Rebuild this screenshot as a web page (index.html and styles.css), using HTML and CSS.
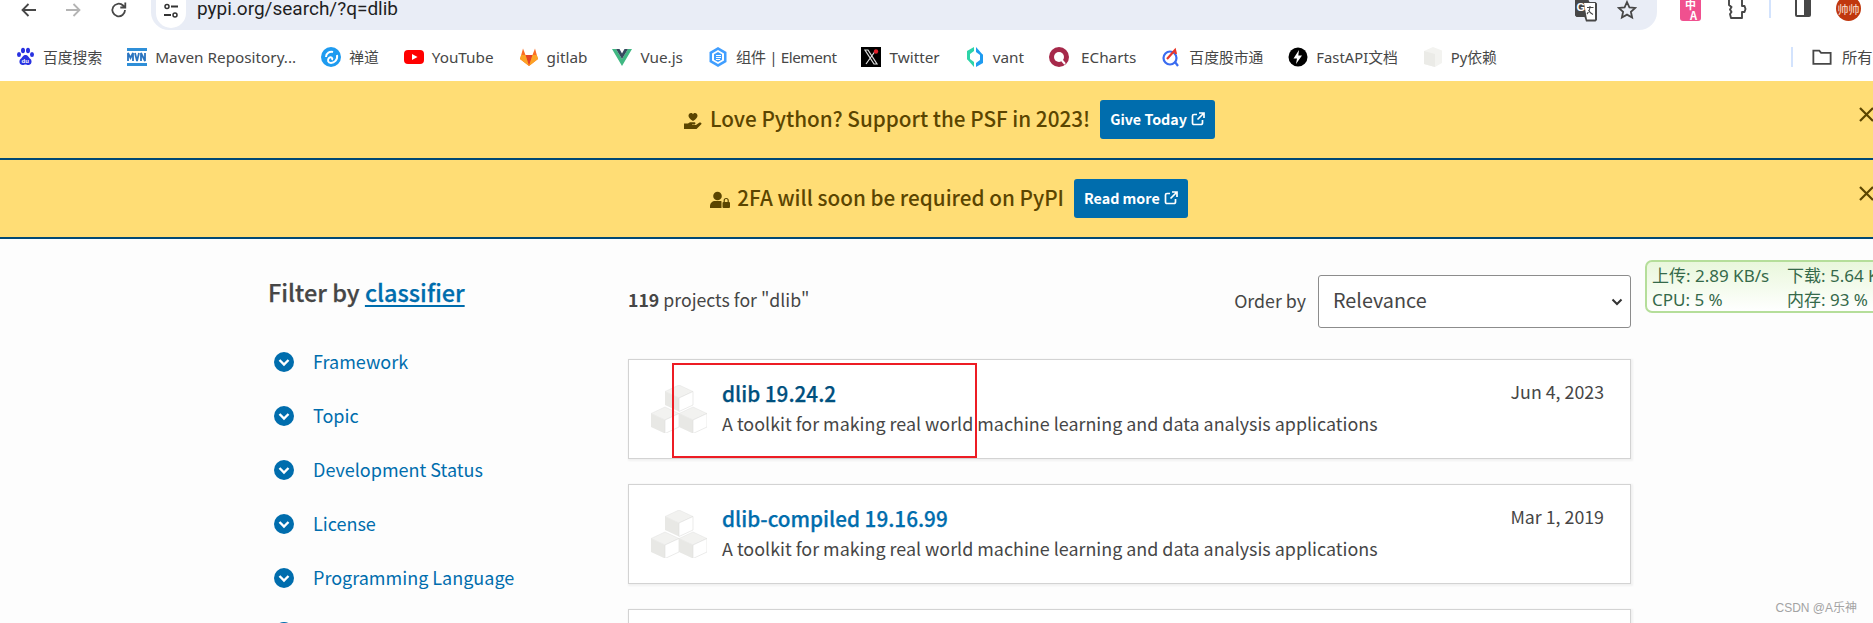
FILE: index.html
```html
<!DOCTYPE html>
<html lang="zh">
<head>
<meta charset="utf-8">
<title>dlib - Search results - PyPI</title>
<link rel="stylesheet" href="styles.css">
</head>
<body>
<div class="toolbar">
  <svg class="tool-icon" viewBox="0 0 20 20"><path d="M17 10H4M9.5 4 3.5 10l6 6" fill="none" stroke="#474747" stroke-width="1.8"/></svg>
  <svg class="tool-icon forward" viewBox="0 0 20 20"><path d="M3 10h13M10.500 4l6 6-6 6" fill="none" stroke="#b4b4b4" stroke-width="1.800"/></svg>
  <svg class="tool-icon reload" viewBox="0 0 20 20"><path d="M16 10a6.300 6.300 0 1 1-1.900-4.500L16 7.300M16.300 2.500v5h-5" fill="none" stroke="#474747" stroke-width="1.800"/></svg>
  <div class="omnibox">
    <span class="site-btn"><svg viewBox="0 0 20 20" width="20" height="20"><circle cx="6" cy="5.500" r="2" fill="none" stroke="#333" stroke-width="1.500"/><path d="M10 5.500h7M3 14h7" stroke="#333" stroke-width="1.800"/><circle cx="14" cy="14" r="2" fill="none" stroke="#333" stroke-width="1.500"/></svg></span>
    <span class="url">pypi.org/search/?q=dlib</span>
    <span class="omni-end">
      <svg class="translate" viewBox="0 0 22 24"><path d="M0 1.500 1.500 0h11l2 4h6L22 5.500V22l-1.500 1.500H11L9.500 19H1.500L0 17.500z" fill="#474747"/><path d="M9 5h11v16.500h-8z" fill="#fff"/><text x="1.500" y="13" class="g-letter">G</text><path d="M12 9.500h6.500M15 8v1.500c-.3 3-1.500 5-3 6.500M13.500 12c.8 2 2.500 3.500 4.500 4.500" fill="none" stroke="#474747" stroke-width="1.100"/></svg>
      <svg class="star" viewBox="0 0 20 20"><path d="m10 2 2.400 5.300 5.800.6-4.300 3.900 1.200 5.700L10 14.600l-5.100 2.900 1.200-5.700-4.300-3.900 5.800-.6z" fill="none" stroke="#474747" stroke-width="1.800"/></svg>
    </span>
  </div>
  <div class="ext-group">
    <span class="ext-pink"><span class="ext-zh">中</span><span class="ext-a">A</span></span>
    <svg class="puzzle" viewBox="0 0 20 20"><path d="M2 -2h13v8h2.500l1 3-1 3H15v6H4l-1-4 1.500-2L3 9.500 4.500 7 2 5z" fill="#fff" stroke="#474747" stroke-width="1.900" stroke-linejoin="round"/></svg>
    <span class="ext-sep"></span>
    <svg class="panel" viewBox="0 0 18 18"><rect x="1" y="-2" width="16" height="19" rx="2" fill="#474747"/><rect x="3" y="0" width="7" height="15" fill="#fff"/></svg>
    <span class="avatar">帅帅</span>
  </div>
</div>

<div class="bookmarks">
  <a class="bm bm-cjk"><svg class="bm-icon" viewBox="0 0 18 20"><g fill="#2932e1"><ellipse cx="3" cy="7.500" rx="2" ry="2.600"/><ellipse cx="7" cy="3.500" rx="2" ry="2.800"/><ellipse cx="12" cy="3.500" rx="2" ry="2.800"/><ellipse cx="16" cy="7.500" rx="2" ry="2.600"/><path d="M9.500 8c2.500 0 3 2.500 5 4 2 2 1 6-2 6-1.500 0-2-.5-3-.5s-1.500.5-3 .5c-3 0-4-4-2-6 2-1.500 2.500-4 5-4z"/></g><text x="5.500" y="16" class="du">du</text></svg><span>百度搜索</span></a>
  <a class="bm"><svg class="bm-icon" viewBox="0 0 20 20"><path d="M0 1h20v3H0zM0 16h20v3H0z" fill="#2f8fd8"/><path d="M1 14V6l2.500 5L6 6v8M8 6l2 8 2-8M14 14V6l4 8V6" fill="none" stroke="#2a74c0" stroke-width="1.800"/></svg><span>Maven Repository...</span></a>
  <a class="bm bm-cjk"><svg class="bm-icon" viewBox="0 0 20 20"><circle cx="10" cy="10" r="10" fill="#1e9bf0"/><path d="M5 10c0-4 4-6 7-5M16 8c1 5-3 8-6 8-3 0-4-3-2-5 2-1.500 4 0 3 2" fill="none" stroke="#fff" stroke-width="2"/></svg><span>禅道</span></a>
  <a class="bm"><svg class="bm-icon" viewBox="0 0 20 20"><rect y="3" width="20" height="14" rx="4" fill="#f00"/><path d="m8 7 5.500 3L8 13z" fill="#fff"/></svg><span>YouTube</span></a>
  <a class="bm"><svg class="bm-icon" viewBox="0 0 20 20"><path d="M10 19 1 12l1.200-4L4 1.500 6.500 8h7L16 1.500 17.800 8l1.200 4z" fill="#fc6d26"/><path d="M10 19 6.500 8h7z" fill="#e24329"/><path d="m1 12 1.200-4h4.300L10 19zM19 12l-1.200-4h-4.300L10 19z" fill="#fca326"/></svg><span>gitlab</span></a>
  <a class="bm"><svg class="bm-icon" viewBox="0 0 20 18"><path d="M0 1h4l6 10 6-10h4L10 18z" fill="#41b883"/><path d="M4 1h3.500L10 5.500 12.500 1H16l-6 10z" fill="#35495e"/></svg><span>Vue.js</span></a>
  <a class="bm bm-el"><svg class="bm-icon" viewBox="0 0 20 20"><path d="m10 0 8.500 5v10L10 20l-8.500-5V5z" fill="#409eff"/><path d="m10 3 6 3.500v7L10 17l-6-3.500v-7z" fill="#fff"/><path d="m10 5 4 2.300v5.400L10 15l-4-2.300V7.300z" fill="#409eff"/><path d="M8 8.500h5M8 10.500h5M8 12.500h4" stroke="#fff" stroke-width="1"/></svg><span>组件 | Element</span></a>
  <a class="bm"><svg class="bm-icon" viewBox="0 0 20 20"><rect width="20" height="20" fill="#000"/><path d="M4 3h3l9 14h-3zM15 3 5 17" fill="none" stroke="#ddd" stroke-width="1.200"/><circle cx="15" cy="4.500" r="2.200" fill="#e0202a"/></svg><span>Twitter</span></a>
  <a class="bm"><svg class="bm-icon" viewBox="0 0 20 20"><path d="M9 0v4L5 7v7l-3-2V4z" fill="#2dd4a8"/><path d="M11 20v-4l4-3V6l3 2v8z" fill="#1e9bf0"/><path d="M2 12l7 8v-5l-4-3z" fill="#2dd4a8"/><path d="M18 8l-7-8v5l4 3z" fill="#1e9bf0"/></svg><span>vant</span></a>
  <a class="bm bm-ec"><svg class="bm-icon" viewBox="0 0 20 20"><circle cx="10" cy="10" r="10" fill="#a6294a"/><circle cx="10" cy="10" r="5" fill="#fff"/><path d="m11 11 5 6" stroke="#fff" stroke-width="2"/></svg><span>ECharts</span></a>
  <a class="bm bm-cjk"><svg class="bm-icon" viewBox="0 0 20 20"><circle cx="9" cy="11" r="6.500" fill="none" stroke="#3a6cf0" stroke-width="2.200"/><path d="M6 12 14 3l1 4" fill="none" stroke="#e8382c" stroke-width="2.200"/><path d="m14 15 3 4" stroke="#3a6cf0" stroke-width="2.200"/></svg><span>百度股市通</span></a>
  <a class="bm bm-cjk"><svg class="bm-icon" viewBox="0 0 20 20"><circle cx="10" cy="10" r="9.500" fill="#000"/><path d="M11 3 5.500 11.500H9L8 17l6-8.500h-3.700z" fill="#fff"/></svg><span>FastAPI文档</span></a>
  <a class="bm bm-cjk"><svg class="bm-icon" viewBox="0 0 20 20"><path d="m10 0 9 3.500V16l-7 4-11-3V4z" fill="#f3f3f0"/><path d="M1 4l11 3v13l-11-3z" fill="#ebebe7"/></svg><span>Py依赖</span></a>
  <span class="bm-sep"></span>
  <a class="bm bm-all"><svg class="bm-icon" viewBox="0 0 22 20"><path d="M1.500 3h6.500l2 2.500h10.500v12h-19z" fill="none" stroke="#474747" stroke-width="2"/></svg><span>所有书签</span></a>
</div>

<div class="banner">
  <div class="banner-msg">
    <svg class="banner-icon" viewBox="0 0 20 18"><path d="M10 9C7 7 5.500 5.500 5.500 3.700 5.500 2.300 6.700 1 8 1c.9 0 1.600.5 2 1.200.4-.7 1.100-1.200 2-1.200 1.300 0 2.500 1.300 2.500 2.700C14.500 5.500 13 7 10 9z" fill="#5b4500"/><path d="M1 11.500h4c1-1 2-1.300 3-1.300h3.500c1.200 0 1.300 2.300 0 2.300H9v.6h4l3.500-2.500c1.500-.8 2.700 1 1.500 2L13.500 17H1z" fill="#5b4500"/></svg>
    <span class="banner-text">Love Python? Support the PSF in 2023!</span>
    <a class="banner-btn">Give Today <svg class="ext-link" viewBox="0 0 14 14"><path d="M6 2.500H3A1.500 1.500 0 0 0 1.500 4v7A1.500 1.500 0 0 0 3 12.500h7a1.500 1.500 0 0 0 1.500-1.500V8M8 1h5v5M13 1 6.500 7.500" fill="none" stroke="#fff" stroke-width="1.700"/></svg></a>
  </div>
  <svg class="banner-close" viewBox="0 0 15 15"><path d="m1 1 13 13M14 1 1 14" fill="none" stroke="#5b4500" stroke-width="2.200"/></svg>
</div>
<div class="banner">
  <div class="banner-msg">
    <svg class="banner-icon" viewBox="0 0 20 18"><circle cx="7.500" cy="5" r="4.300" fill="#5b4500"/><path d="M0 17v-2c0-3 2.500-5 5-5h5c.6 0 1.200.1 1.500.3V17z" fill="#5b4500"/><rect x="12.500" y="11" width="7.500" height="6" rx="1" fill="#5b4500"/><path d="M14.200 11V9.500a2 2 0 0 1 4 0V11" fill="none" stroke="#5b4500" stroke-width="1.200"/></svg>
    <span class="banner-text">2FA will soon be required on PyPI</span>
    <a class="banner-btn">Read more <svg class="ext-link" viewBox="0 0 14 14"><path d="M6 2.500H3A1.500 1.500 0 0 0 1.500 4v7A1.500 1.500 0 0 0 3 12.500h7a1.500 1.500 0 0 0 1.500-1.500V8M8 1h5v5M13 1 6.500 7.500" fill="none" stroke="#fff" stroke-width="1.700"/></svg></a>
  </div>
  <svg class="banner-close" viewBox="0 0 15 15"><path d="m1 1 13 13M14 1 1 14" fill="none" stroke="#5b4500" stroke-width="2.200"/></svg>
</div>

<main class="page">
  <aside class="sidebar">
    <h2 class="filter-title">Filter by <a class="filter-link">classifier</a></h2>
    <ul class="filter-list">
      <li class="filter-item"><svg class="chev" viewBox="0 0 20 20"><circle cx="10" cy="10" r="10" fill="#006dad"/><path d="m5.500 8 4.500 4.500L14.500 8" fill="none" stroke="#fff" stroke-width="2.400"/></svg>Framework</li>
      <li class="filter-item"><svg class="chev" viewBox="0 0 20 20"><circle cx="10" cy="10" r="10" fill="#006dad"/><path d="m5.500 8 4.500 4.500L14.500 8" fill="none" stroke="#fff" stroke-width="2.400"/></svg>Topic</li>
      <li class="filter-item"><svg class="chev" viewBox="0 0 20 20"><circle cx="10" cy="10" r="10" fill="#006dad"/><path d="m5.500 8 4.500 4.500L14.500 8" fill="none" stroke="#fff" stroke-width="2.400"/></svg>Development Status</li>
      <li class="filter-item"><svg class="chev" viewBox="0 0 20 20"><circle cx="10" cy="10" r="10" fill="#006dad"/><path d="m5.500 8 4.500 4.500L14.500 8" fill="none" stroke="#fff" stroke-width="2.400"/></svg>License</li>
      <li class="filter-item"><svg class="chev" viewBox="0 0 20 20"><circle cx="10" cy="10" r="10" fill="#006dad"/><path d="m5.500 8 4.500 4.500L14.500 8" fill="none" stroke="#fff" stroke-width="2.400"/></svg>Programming Language</li>
      <li class="filter-item"><svg class="chev" viewBox="0 0 20 20"><circle cx="10" cy="10" r="10" fill="#006dad"/><path d="m5.500 8 4.500 4.500L14.500 8" fill="none" stroke="#fff" stroke-width="2.400"/></svg>Operating System</li>
    </ul>
  </aside>
  <section class="results">
    <div class="results-head">
      <p class="count"><strong>119</strong> projects for "dlib"</p>
      <div class="order">
        <span class="order-label">Order by</span>
        <div class="select"><span class="select-text">Relevance</span><svg class="select-arrow" viewBox="0 0 12 8"><path d="m1.500 1.500 4.500 4.500 4.500-4.500" fill="none" stroke="#333" stroke-width="2"/></svg></div>
      </div>
    </div>
    <a class="card">
      <svg class="cubes" viewBox="0 0 56 48"><use href="#cube" x="14" y="0"/><use href="#cube" x="0" y="22"/><use href="#cube" x="28" y="22"/></svg>
      <div class="card-body"><h3 class="card-title visited">dlib 19.24.2</h3><p class="card-desc">A toolkit for making real world machine learning and data analysis applications</p></div>
      <time class="card-date">Jun 4, 2023</time>
    </a>
    <a class="card">
      <svg class="cubes" viewBox="0 0 56 48"><use href="#cube" x="14" y="0"/><use href="#cube" x="0" y="22"/><use href="#cube" x="28" y="22"/></svg>
      <div class="card-body"><h3 class="card-title">dlib-compiled 19.16.99</h3><p class="card-desc">A toolkit for making real world machine learning and data analysis applications</p></div>
      <time class="card-date">Mar 1, 2019</time>
    </a>
    <a class="card"></a>
  </section>
</main>

<svg class="defs" width="0" height="0"><defs><g id="cube"><path d="M14 0 28 6.500 14 13 0 6.500z" fill="#f2f2f0" stroke="#e2e2e0" stroke-width=".5"/><path d="M0 6.500 14 13v13.500L0 20z" fill="#e8e8e5"/><path d="M28 6.500 14 13v13.500L28 20z" fill="#fff" stroke="#dededc" stroke-width=".6"/></g></defs></svg>

<div class="netspeed">
  <div class="net-row"><span class="net-a">上传: 2.89 KB/s</span><span>下载: 5.64 KB/s</span></div>
  <div class="net-row"><span class="net-a">CPU: 5 %</span><span>内存: 93 %</span></div>
</div>
<div class="annot"></div>
<div class="watermark">CSDN @A乐神</div>
</body>
</html>
```
FILE: styles.css
```css
* { box-sizing: border-box; }
html, body { margin: 0; padding: 0; }
body {
  width: 1873px; height: 623px; overflow: hidden; position: relative;
  background: #fdfdfd;
  font-family: "Noto Sans CJK SC", "Noto Sans", sans-serif;
  color: #464646;
}
.defs { position: absolute; }
.toolbar { height: 38px; background: #fff; display: flex; align-items: flex-start; position: relative; }
.tool-icon { width: 20px; height: 20px; margin-top: 0; flex: none; margin-left: 19px; }
.forward { margin-left: 24px; }
.reload { margin-left: 26px; }
.omnibox { position: absolute; left: 151px; top: 0; width: 1506px; height: 30px; background: #e9edf6; border-radius: 0 0 18px 18px; display: flex; align-items: flex-start; }
.site-btn { width: 30px; height: 28px; margin-left: 5px; background: #fff; border-radius: 0 0 15px 15px; display: flex; justify-content: center; padding-top: 1px; flex: none; }
.url { margin-left: 11px; font: 19px/18px Roboto, "Noto Sans", sans-serif; color: #1f1f1f; }
.omni-end { margin-left: auto; display: flex; gap: 20px; padding-right: 20px; }
.translate { width: 22px; height: 24px; margin-top: -2px; }
.g-letter { font: 700 11px "Liberation Sans", sans-serif; fill: #fff; }
.star { width: 20px; height: 20px; margin-top: 0; }
.ext-group { position: absolute; left: 1680px; top: 0; display: flex; align-items: flex-start; }
.ext-pink { width: 21px; height: 21px; background: #f0508f; border-radius: 0 0 3px 3px; color: #fff; font: 700 11px/10px "Noto Sans CJK SC", sans-serif; display: grid; grid-template-columns: 1fr; justify-items: center; }
.ext-zh { line-height: 9px; }
.ext-a { line-height: 11px; margin-left: 6px; }
.puzzle { width: 20px; height: 20px; margin-left: 26px; }
.ext-sep { width: 2px; height: 18px; background: #d3e3fd; margin-left: 22px; }
.panel { width: 18px; height: 18px; margin-left: 23px; }
.avatar { width: 25px; height: 25px; margin-left: 24px; margin-top: -4px; border-radius: 50%; background: #c0370e; color: #fbe3d3; font: 11px/26px "Noto Sans CJK SC", sans-serif; text-align: center; }

.bookmarks { height: 43px; background: #fff; display: flex; align-items: center; padding-left: 15px; padding-bottom: 6px; gap: 25px; font: 15.300px/20px "Noto Sans", "Noto Sans CJK SC", sans-serif; color: #474747; white-space: nowrap; overflow: hidden; }
.bm { display: flex; align-items: center; gap: 8px; flex: none; }
.bm-cjk { font-size: 14.800px; }
.bm-el { letter-spacing: -.45px; }
.bm-icon { width: 20px; height: 20px; flex: none; }
.bm-ec { gap: 12px; }
.du { font: 700 6px "Liberation Sans", sans-serif; fill: #fff; }
.bm-sep { width: 2px; height: 20px; background: #d3e3fd; margin-left: auto; margin-right: -6px; flex: none; }
.bm-all { width: 61px; margin-right: 0; gap: 10px; }

.banner { height: 79px; background: #ffdd75; border-bottom: 2px solid #004875; width: 1898px; display: flex; align-items: center; justify-content: center; position: relative; }
.banner-msg { display: flex; align-items: center; font: 500 20.700px/30px "Noto Sans CJK SC", sans-serif; color: #5b4500; }
.banner-icon { width: 20px; height: 18px; margin-right: 7px; margin-top: 3px; flex: none; }
.banner-text { padding-bottom: 3px; }
.banner-btn { margin-left: 10px; height: 39px; padding: 0 10px 2px; background: #006dad; border-radius: 3px; color: #fff; font: 700 14.300px/36px "Noto Sans CJK SC", sans-serif; display: flex; align-items: center; gap: 4px; }
.ext-link { width: 14px; height: 14px; }
.banner-close { position: absolute; left: 1859px; top: 26px; width: 15px; height: 15px; }

.page { display: grid; grid-template-columns: 360px 1003px; padding-left: 268px; }
.sidebar { padding-top: 36px; }
.filter-title { margin: 0; font: 500 23.500px/34px "Noto Sans CJK SC", sans-serif; color: #464646; -webkit-text-stroke: .25px currentColor; }
.filter-link { color: #006dad; text-decoration: underline; text-underline-offset: 3px; }
.filter-list { list-style: none; margin: 26px 0 0; padding: 0 0 2px; }
.filter-item { height: 54px; display: flex; align-items: center; gap: 19px; padding: 0 0 2px 6px; font: 400 18px/24px "Noto Sans CJK SC", sans-serif; color: #006dad; }
.chev { width: 20px; height: 20px; flex: none; margin-top: 2px; }

.results-head { display: flex; justify-content: space-between; align-items: center; height: 53px; margin-top: 36px; margin-bottom: 31px; }
.count { margin: 0; padding-bottom: 5px; font: 400 17.700px/24px "Noto Sans CJK SC", sans-serif; color: #464646; }
.count strong { font-weight: 700; }
.order { display: flex; align-items: center; gap: 12px; font: 400 17.800px/24px "Noto Sans CJK SC", sans-serif; }
.order-label { padding-bottom: 3px; }
.select { width: 313px; height: 53px; border: 1px solid #8c8c8c; border-radius: 3px; background: #fff; display: flex; align-items: center; justify-content: space-between; padding: 0 7px 0 14px; font-size: 19.800px; }
.select-text { padding-bottom: 3px; }
.select-arrow { width: 12px; height: 8px; }
.card { display: flex; height: 100px; background: #fff; border: 1px solid #d3d3d3; box-shadow: 1px 1px 2px 1px rgba(0,0,0,.05); margin-bottom: 25px; padding: 0 26px 0 22px; position: relative; }
.cubes { width: 56px; height: 48px; margin-top: 25px; flex: none; }
.card-body { margin-left: 15px; flex: 1; padding-top: 19px; }
.card-title { margin: 0; font: 500 20.700px/28px "Noto Sans CJK SC", sans-serif; color: #006dad; -webkit-text-stroke: .25px currentColor; }
.card-title.visited { color: #00507e; }
.card-desc { margin: 3px 0 0; font: 400 17.900px/26px "Noto Sans CJK SC", sans-serif; color: #464646; }
.card-date { font: 400 17.800px/26px "Noto Sans CJK SC", sans-serif; padding-top: 18px; color: #464646; }

.netspeed { position: absolute; left: 1645px; top: 260px; width: 260px; height: 53px; border: 2px solid #b5de9a; border-radius: 7px; background: linear-gradient(#e9f7dc, #f6fcf0 60%, #fff); color: #35694a; font: 17px/24px "Noto Sans", "Noto Sans CJK SC", sans-serif; padding: 2px 0 0 5px; }
.net-row { display: flex; white-space: nowrap; }
.net-a { width: 135px; flex: none; }
.annot { position: absolute; left: 672px; top: 363px; width: 305px; height: 95px; border: 2px solid #ed1c24; }
.watermark { position: absolute; right: 16px; top: 599px; font: 12px/18px "Liberation Sans", "Noto Sans CJK SC", sans-serif; color: #a3a3a3; }
```
